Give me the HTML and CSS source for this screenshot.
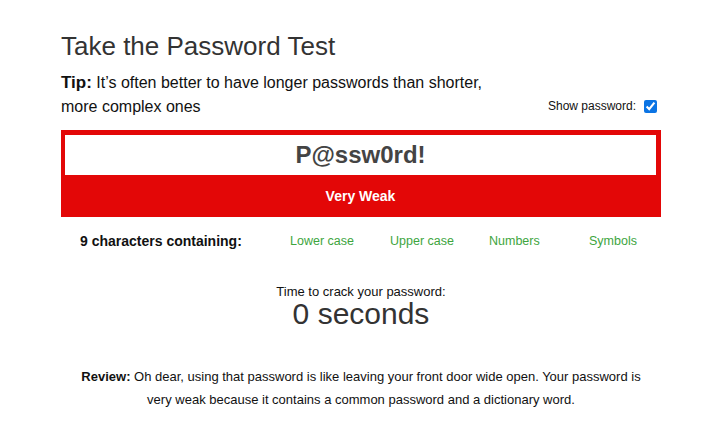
FILE: index.html
```html
<!DOCTYPE html>
<html>
<head>
<meta charset="utf-8">
<link rel="stylesheet" href="styles.css">
</head>
<body>
<div class="wrap">
  <h1 class="title">Take the Password Test</h1>
  <div class="tiprow">
    <p class="tip"><b>Tip:</b> It’s often better to have longer passwords than shorter, more complex ones</p>
    <label class="show">Show password: <input type="checkbox" checked></label>
  </div>
  <div class="meter">
    <div class="pw">P@ssw0rd!</div>
    <div class="rating">Very Weak</div>
  </div>
  <div class="chars">
    <div class="count">9 characters containing:</div>
    <div class="kind">Lower case</div>
    <div class="kind">Upper case</div>
    <div class="kind">Numbers</div>
    <div class="kind">Symbols</div>
  </div>
  <div class="time">
    <div class="tlabel">Time to crack your password:</div>
    <div class="tval">0 seconds</div>
  </div>
  <p class="review"><b>Review:</b> Oh dear, using that password is like leaving your front door wide open. Your password is very weak because it contains a common password and a dictionary word.</p>
</div>
</body>
</html>
```
FILE: styles.css
```css
html, body { margin: 0; padding: 0; background: #fff; }
body { font-family: "Liberation Sans", Arial, sans-serif; color: #111; }
.wrap { width: 600px; padding: 30px 0 0 61px; }
.title { margin: 0; font-size: 26px; font-weight: normal; color: #333; line-height: 32px; }
.tiprow { display: flex; justify-content: space-between; align-items: flex-end; margin-top: 9px; }
.tip { margin: 0; width: 440px; font-size: 16px; line-height: 24px; color: #111; }
.tip b { font-size: 17px; }
.show { font-size: 12px; display: flex; align-items: center; gap: 8px; margin-right: 4px; margin-bottom: 6px; }
.show input { margin: 0; width: 13px; height: 13px; accent-color: #0b74e4; }
.meter { margin-top: 11px; background: #e30707; padding: 5px 5px 0 4px; }
.pw { background: #fff; height: 40px; line-height: 40px; text-align: center; font-size: 24px; font-weight: bold; color: #444; }
.rating { height: 42px; line-height: 42px; text-align: center; color: #fff; font-weight: bold; font-size: 14px; }
.chars { display: grid; grid-template-columns: 229px 100px 99px 100px 72px; align-items: center; margin-top: 16px; font-size: 12.5px; }
.count { font-weight: bold; font-size: 14px; padding-left: 19px; color: #111; }
.kind { color: #3ea53e; }
.time { text-align: center; margin-top: 35px; }
.tlabel { font-size: 13px; line-height: 15px; }
.tval { font-size: 30px; line-height: 30px; color: #333; }
.review { margin: 36px 0 0; padding: 0 18px; text-align: center; font-size: 13px; line-height: 23px; }
```
